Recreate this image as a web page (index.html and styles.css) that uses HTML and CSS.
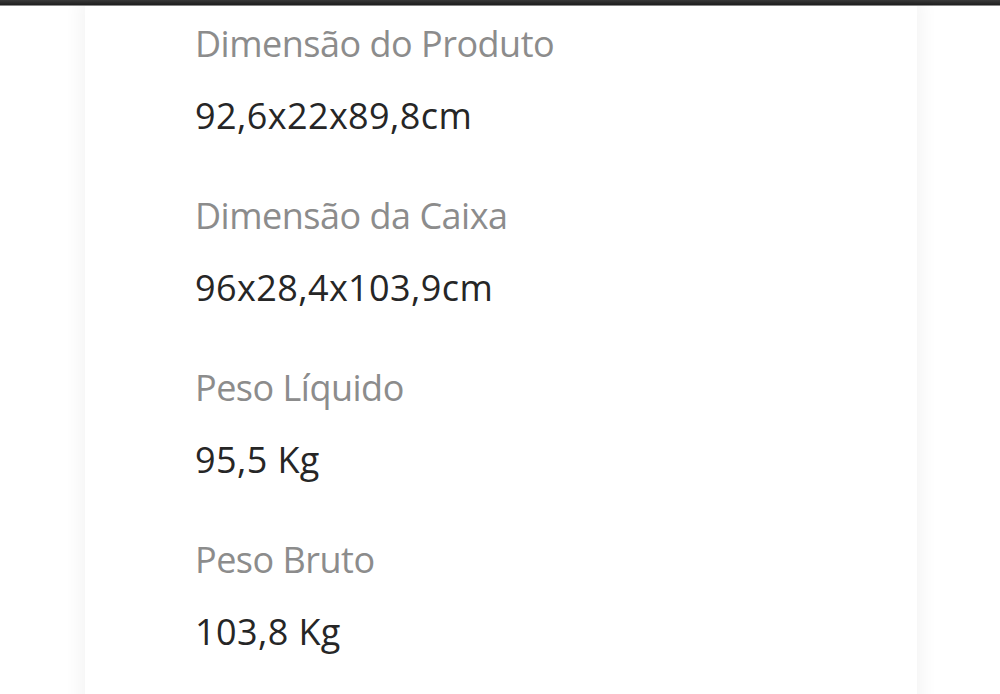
FILE: index.html
```html
<!DOCTYPE html>
<html lang="pt-BR">
<head>
  <meta charset="UTF-8" />
  <meta name="viewport" content="width=device-width, initial-scale=1.0"/>
  <title>Especificações</title>
  <link rel="stylesheet" href="styles.css">
</head>
<body>
  <div class="topbar"></div>
  <div class="page">
    <div class="card">
      <dl class="specs">
        <dt>Dimensão do Produto</dt>
        <dd>92,6x22x89,8cm</dd>

        <dt>Dimensão da Caixa</dt>
        <dd>96x28,4x103,9cm</dd>

        <dt>Peso Líquido</dt>
        <dd>95,5 Kg</dd>

        <dt>Peso Bruto</dt>
        <dd>103,8 Kg</dd>
      </dl>
    </div>
  </div>
</body>
</html>
```

FILE: styles.css
```css
body {
  font-family: 'Open Sans', Lato, sans-serif;
  background: #ffffff;
  margin: 0;
  height: 694px;
  overflow: hidden;
}
.topbar {
  height: 5px;
  background: linear-gradient(to bottom, #3a3a3a, #1f1f1f);
  border-bottom: 1px solid #8a8a8a;
}
.page {
  display: flex;
  justify-content: center;
  padding-left: 2px;
}
.card {
  width: 832px;
  height: 700px;
  background: #ffffff;
  box-shadow: 0 0 16px 6px rgba(0, 0, 0, 0.045);
  padding: 0 0 0 110px;
  box-sizing: border-box;
}
.specs {
  margin: 0;
  padding-top: 18px;
}
.specs dt {
  font-size: 36px;
  line-height: 40px;
  color: #8c8c8c;
  margin-bottom: 32px;
  letter-spacing: -0.5px;
}
.specs dd {
  margin: 0 0 60px;
  font-size: 36px;
  line-height: 40px;
  color: #262626;
  letter-spacing: 0.4px;
}
```
